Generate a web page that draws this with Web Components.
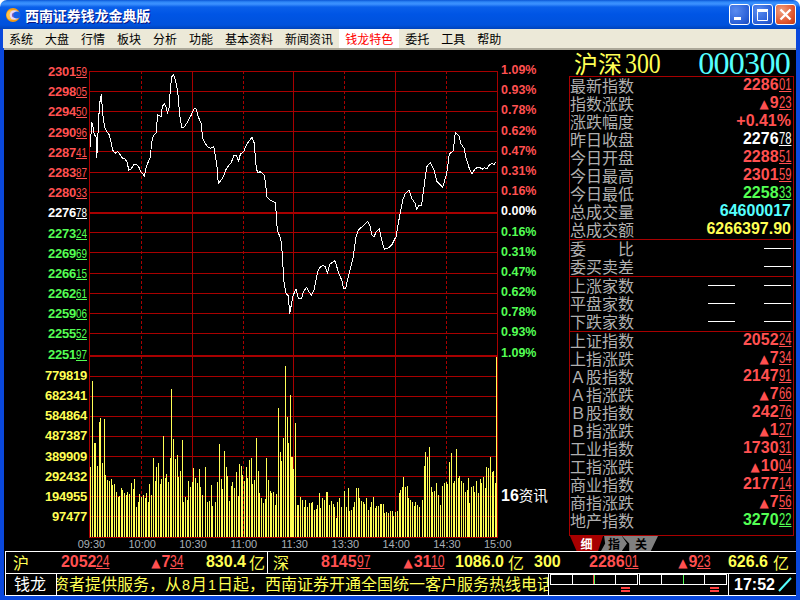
<!DOCTYPE html>
<html lang="zh">
<head>
<meta charset="utf-8">
<title>西南证券钱龙金典版</title>
<style>
html, body { margin: 0; padding: 0; background: #fff; }
</style>
</head>
<body>
<qm-window></qm-window>
<script>
const CJK = '"Noto Sans CJK SC", sans-serif';
const LATIN = '"Liberation Sans", "Noto Sans CJK SC", sans-serif';
const TONES = { red: '#ff5050', green: '#54ff54', white: '#ffffff', cyan: '#54ffff', yellow: '#ffff54' };

/**
 * A number in the terminal's style: big integer part, squeezed underlined decimals
 */
customElements.define('qm-num', class extends HTMLElement {

  constructor() {
    super();

    this.attachShadow({ mode: 'open' });
    const [whole, decimals] = (this.getAttribute('v') || '').split('.');
    const plain = this.hasAttribute('plain');
    const text = plain ? this.getAttribute('v') : `${whole}<u><i>${decimals || ''}</i></u>`;

    this.shadowRoot.innerHTML = `
      <style>
      :host {
        display: inline-block;
        font: bold var(--num-size, 16px) ${LATIN};
        color: ${TONES[this.getAttribute('tone') || 'red']};
        white-space: nowrap;
        letter-spacing: var(--num-track, 0);
      }
      u {
        display: inline-block;
        font-weight: 400;
        letter-spacing: 0;
        width: calc(1.112em * var(--dec, .7));
        text-decoration: underline;
      }
      i {
        display: inline-block;
        font-style: normal;
        transform: scaleX(var(--dec, .7));
        transform-origin: 0 50%;
        text-decoration: underline;
      }
      .up {
        font: 12px "DejaVu Sans", sans-serif;
        margin-right: 1px;
        letter-spacing: 0;
      }
      </style>
      ${this.hasAttribute('up') ? '<span class="up">▲</span>' : ''}${text}
    `;
  }

});


customElements.define('qm-titlebar', class extends HTMLElement {

  constructor() {
    super();

    this.attachShadow({ mode: 'open' });

    this.shadowRoot.innerHTML = `
      <style>
      :host {
        display: flex;
        align-items: center;
        height: 29px;
        flex: none;
        box-sizing: border-box;
        padding: 0 4px 0 5px;
        border-radius: 7px 7px 0 0;
        background: linear-gradient(#0a56d6 0, #2f88f8 2px, #3d92ff 4px, #0a60ea 7px, #0055e5 14px, #0052dc 25px, #0043bb 29px);
      }
      .name {
        margin-left: 4px;
        font: bold 14px/16px ${CJK};
        letter-spacing: -.1px;
        color: #fff;
        text-shadow: 1px 1px 0 #0a1883;
        flex: 1;
      }
      .btns { display: flex; gap: 2px; }
      .btn {
        width: 21px;
        height: 21px;
        box-sizing: border-box;
        border: 1px solid #fff;
        border-radius: 3px;
        background: radial-gradient(circle at 30% 30%, #5a8cf0, #2a5fd6 70%, #1c48b8);
        display: block;
      }
      .btn.close { background: radial-gradient(circle at 30% 30%, #f0a080, #e0542c 65%, #c03a14); }
      svg { display: block; }
      </style>
      <svg width="16" height="16" viewBox="0 0 16 16">
        <circle cx="8" cy="8" r="7" fill="#f59a10"/>
        <circle cx="6.5" cy="8" r="5" fill="#ffc34a"/>
        <circle cx="9.5" cy="8" r="4.8" fill="#e4d8fb"/>
        <circle cx="9.5" cy="8" r="2.6" fill="#7f5ec0"/>
        <circle cx="12" cy="8" r="3.6" fill="#1560e6"/>
      </svg>
      <span class="name">西南证券钱龙金典版</span>
      <div class="btns">
        <svg class="btn" viewBox="0 0 19 19"><rect x="4" y="12" width="7" height="3" fill="#fff"/></svg>
        <svg class="btn" viewBox="0 0 19 19"><path d="M4.5 6.5h10v9h-10z" fill="none" stroke="#fff"/><rect x="4" y="4" width="11" height="2.5" fill="#fff"/></svg>
        <svg class="btn close" viewBox="0 0 19 19"><path d="M4.5 4.5l10 10M14.5 4.5l-10 10" stroke="#fff" stroke-width="2.4"/></svg>
      </div>
    `;
  }

});


customElements.define('qm-menubar', class extends HTMLElement {

  constructor() {
    super();

    this.attachShadow({ mode: 'open' });

    const items = ['系统', '大盘', '行情', '板块', '分析', '功能', '基本资料', '新闻资讯', '钱龙特色', '委托', '工具', '帮助'];

    this.shadowRoot.innerHTML = `
      <style>
      :host {
        display: flex;
        flex: none;
        height: 19px;
        margin-left: -1px;
        background: #ece9d8;
        font: 12px/19px ${CJK};
        color: #000;
      }
      span { padding: 0 6px; }
      .on { background: #fff; color: #f00; }
      </style>
      ${items.map((m) => `<span class="${m === '钱龙特色' ? 'on' : ''}">${m}</span>`).join('')}
    `;
  }

});


/**
 * The intraday chart: price and volume drawn in one svg, axis labels either side in flow
 */
customElements.define('qm-chart', class extends HTMLElement {

  constructor() {
    super();

    this.attachShadow({ mode: 'open' });

    const prices = ['2301.59', '2298.05', '2294.50', '2290.96', '2287.41', '2283.87', '2280.33', '2276.78', '2273.24', '2269.69', '2266.15', '2262.61', '2259.06', '2255.52', '2251.97'];
    const volumes = ['779819', '682341', '584864', '487387', '389909', '292432', '194955', '97477'];
    const pcts = ['1.09%', '0.93%', '0.78%', '0.62%', '0.47%', '0.31%', '0.16%', '0.00%', '0.16%', '0.31%', '0.47%', '0.62%', '0.78%', '0.93%', '1.09%'];
    const times = ['09:30', '10:00', '10:30', '11:00', '11:30', '13:30', '14:00', '14:30', '15:00'];
    const tone = (i) => (i < 7 ? 'red' : i === 7 ? 'white' : 'green');

    this.shadowRoot.innerHTML = `
      <style>
      :host {
        display: grid;
        grid-template-columns: 84px 409px 71px;
        grid-template-rows: 488px 13px;
        width: 564px;
        flex: none;
        --num-size: 13px;
        --num-track: -.25px;
        --dec: .76;
      }
      .axis { display: flex; flex-direction: column; padding-top: 11px; box-sizing: border-box; }
      .axis div { height: 20.2px; line-height: 20.2px; flex: none; }
      .left { text-align: right; padding-right: 2px; }
      .left .vol { font: bold 13px/20.2px ${LATIN}; letter-spacing: -.25px; color: ${TONES.yellow}; }
      .left .vol.first { margin-top: 2px; }
      .pct { padding: 10px 0 0 3px; font: bold 12.5px/20.2px ${LATIN}; }
      .pct .news {
        margin-top: auto;
        margin-bottom: 34px;
        height: 18px;
        line-height: 18px;
        color: #fff;
        font: 14.5px/18px ${CJK};
        white-space: nowrap;
      }
      .news b { font: bold 16px/18px ${LATIN}; }
      svg { display: block; }
      .times {
        grid-column: 1 / -1;
        display: flex;
        padding-left: 61px;
        font: 11px/13px ${LATIN};
        color: #a8b0b8;
      }
      .times span { flex: 0 0 50.8px; text-align: center; }
      </style>
      <div class="axis left">
        ${prices.map((p, i) => `<div><qm-num v="${p}" tone="${tone(i)}"></qm-num></div>`).join('')}
        ${volumes.map((v, i) => `<div class="vol ${i ? '' : 'first'}">${v}</div>`).join('')}
      </div>
      <svg width="409" height="488" viewBox="89 50 409 488" shape-rendering="crispEdges">${this.plot()}</svg>
      <div class="axis pct">
        ${pcts.map((p, i) => `<div style="color:${TONES[tone(i)]}">${p}</div>`).join('')}
        <div class="news"><b>16</b>资讯</div>
      </div>
      <div class="times">${times.map((t) => `<span>${t}</span>`).join('')}</div>
    `;
  }

  plot() {
    const rows = [71, 91, 111, 131, 151, 172, 192, 232, 252, 273, 293, 313, 333, 376, 396, 416, 436, 456, 476, 496, 516, 537];
    const solid = [89, 192, 293, 395, 497];
    const dashed = [141, 243, 344, 446];

    // traced from the chart at 3x: [x, y] pairs in crop coordinates
    const lineA = [[16,260],[20,185],[25,205],[28,225],[33,230],[35,293],[37,265],[41,175],[44,130],[49,103],[53,160],[57,190],[61,208],[66,215],[73,225],[78,245],[83,270],[90,280],[98,274],[106,285],[113,295],[120,296],[127,308],[131,330],[138,327],[147,313],[155,315],[161,320],[167,335],[172,340],[178,348],[183,325],[190,305],[196,293],[200,245],[205,228],[213,218],[218,165],[228,170],[232,140],[238,130],[243,140],[247,158],[252,145],[256,90],[260,50],[266,45],[272,65],[278,95],[284,165],[290,202],[297,202],[305,190],[312,176],[319,165],[327,146],[334,147],[340,170],[348,190],[353,235],[360,250],[368,260],[377,265],[386,260],[391,285],[396,320],[400,370],[407,362],[415,350],[422,330],[430,318],[438,310],[447,285],[453,285],[461,303],[466,283],[476,275],[484,255],[492,243],[501,232],[508,250],[511,290],[514,325],[518,338],[526,335],[538,345],[542,375],[546,410],[555,420],[570,427],[574,460],[577,512],[587,535],[592,580],[596,660],[603,700],[610,708],[614,763]];
    const lineB = [[0,757],[8,710],[18,686],[25,716],[35,715],[40,695],[50,682],[57,695],[64,706],[72,690],[83,635],[90,622],[100,616],[106,620],[112,640],[120,612],[135,602],[146,640],[155,660],[161,686],[167,685],[175,650],[190,590],[198,530],[205,510],[220,497],[233,484],[240,498],[245,525],[252,532],[258,515],[268,506],[275,540],[283,568],[295,564],[305,555],[318,530],[325,490],[338,420],[345,403],[357,391],[365,415],[375,430],[380,448],[386,436],[395,435],[402,380],[410,320],[421,308],[432,330],[441,365],[458,382],[470,340],[478,282],[490,272],[496,217],[508,228],[512,250],[522,265],[528,295],[538,325],[546,342],[556,325],[568,322],[577,328],[583,323],[590,327],[598,315],[608,310],[612,315],[617,305]];
    const barsA = [[16,350],[22,93],[27,280],[32,280],[37,347],[43,215],[47,205],[53,340],[58,207],[62,375],[67,390],[73,392],[78,388],[83,405],[88,402],[95,425],[100,440],[103,437],[109,415],[113,420],[118,430],[124,436],[128,426],[133,432],[139,400],[144,416],[149,388],[154,470],[160,456],[164,432],[170,440],[175,435],[180,445],[185,430],[190,455],[193,402],[199,435],[205,323],[210,392],[215,350],[220,340],[225,402],[230,388],[235,258],[240,385],[245,372],[250,395],[256,323],[259,117],[265,267],[271,327],[276,316],[281,380],[286,362],[292,270],[296,455],[302,440],[306,450],[311,392],[316,412],[322,395],[326,353],[331,385],[337,398],[342,357],[347,410],[352,436],[360,352],[362,390],[367,455],[373,452],[378,405],[382,468],[390,455],[397,397],[403,282],[409,388],[413,418],[418,303],[423,350],[427,378],[433,452],[439,408],[443,395],[448,415],[454,365],[459,437],[463,342],[469,347],[473,375],[479,392],[483,350],[488,385],[493,330],[499,323],[503,403],[508,390],[514,265],[520,362],[524,430],[530,443],[535,458],[541,448],[545,323],[550,390],[555,423],[560,430],[565,426],[571,464],[575,432],[580,175],[586,305],[590,332],[595,263],[601,48],[606,200],[611,278],[616,163],[620,320],[625,357]];
    const barsB = [[2,135],[7,320],[11,357],[16,218],[22,465],[26,465],[32,440],[37,450],[42,472],[46,450],[52,470],[58,460],[64,458],[68,456],[74,480],[78,477],[83,465],[88,428],[92,473],[97,443],[103,450],[109,426],[113,426],[118,465],[124,453],[129,462],[133,470],[138,505],[143,456],[149,443],[155,472],[163,422],[169,470],[175,413],[179,483],[185,480],[190,470],[193,456],[199,413],[205,413],[209,445],[214,453],[219,457],[224,462],[229,443],[235,480],[241,472],[245,456],[250,440],[256,475],[260,468],[265,468],[270,462],[275,462],[280,462],[284,490],[290,485],[295,488],[300,482],[306,483],[311,498],[316,485],[322,482],[327,430],[332,420],[338,410],[341,380],[347,410],[352,407],[355,443],[361,450],[367,455],[372,468],[376,457],[382,465],[387,470],[397,450],[403,347],[407,305],[412,320],[417,290],[423,410],[427,426],[433,422],[439,398],[445,435],[452,465],[458,407],[463,400],[469,396],[472,402],[478,335],[484,308],[489,400],[494,393],[499,296],[504,385],[508,378],[514,393],[520,400],[525,425],[531,420],[535,383],[539,460],[544,410],[549,408],[553,425],[559,392],[565,428],[571,388],[575,398],[581,380],[586,415],[590,350],[595,353],[601,320],[606,365],[611,363],[617,400],[620,20]];

    const line = lineA.map(([x, y]) => [85 + x / 3, 60 + y / 3])
      .concat(lineB.map(([x, y]) => [290 + x / 3, 60 + y / 3]));
    const bars = barsA.map(([x, y]) => [85 + x / 3, 350 + y / 3])
      .concat(barsB.map(([x, y]) => [290 + x / 3, 350 + y / 3]));

    const grid = '#a80000';
    const dashes = [];
    dashed.forEach((x) => {
      for (let y = 71; y < 537; y += 5) {
        dashes.push(`<rect x="${x}" y="${y}" width="1" height="3" fill="${grid}"/>`);
      }
    });

    return `
      ${rows.map((y) => `<rect x="89" y="${y}" width="409" height="1" fill="${grid}"/>`).join('')}
      <rect x="89" y="212" width="409" height="2" fill="${grid}"/>
      <rect x="89" y="355" width="409" height="2" fill="${grid}"/>
      ${solid.map((x) => `<rect x="${x}" y="71" width="1" height="467" fill="${grid}"/>`).join('')}
      ${dashes.join('')}
      <polyline points="${line.map(([x, y]) => `${x.toFixed(1)},${y.toFixed(1)}`).join(' ')}" fill="none" stroke="#fff"/>
      ${bars.map(([x, y]) => `<rect x="${Math.floor(x)}" y="${Math.round(y)}" width="1" height="${537 - Math.round(y)}" fill="#ffff55"/>`).join('')}
    `;
  }

});


/**
 * One label + values line of the quote panel. The label goes in the default slot
 */
customElements.define('qm-row', class extends HTMLElement {

  constructor() {
    super();

    this.attachShadow({ mode: 'open' });

    this.shadowRoot.innerHTML = `
      <style>
      :host {
        display: flex;
        align-items: center;
        justify-content: space-between;
        height: 18px;
        box-sizing: border-box;
        padding: 0 2px 2px 0;
      }
      .label {
        font: 16px/16px ${CJK};
        color: #b0b0b0;
        width: 64px;
        display: flex;
        justify-content: space-between;
        white-space: nowrap;
      }
      .value { display: flex; align-items: center; }
      </style>
      <div class="label"><slot></slot></div>
      <div class="value"><slot name="value"></slot></div>
    `;
  }

});


customElements.define('qm-dash', class extends HTMLElement {

  constructor() {
    super();

    this.attachShadow({ mode: 'open' });

    this.shadowRoot.innerHTML = `
      <style>
      :host { display: block; width: 27px; height: 1px; background: #fff; margin-left: 29px; }
      </style>
    `;
  }

});


customElements.define('qm-tabs', class extends HTMLElement {

  constructor() {
    super();

    this.attachShadow({ mode: 'open' });

    this.shadowRoot.innerHTML = `
      <style>
      :host {
        display: flex;
        height: 15px;
        margin-left: 1px;
        font: bold 12px/15px ${CJK};
      }
      span {
        display: block;
        height: 15px;
        text-align: center;
      }
      .on {
        width: 33px;
        background: #a80000;
        color: #fff;
        clip-path: polygon(0 0, 100% 0, 85% 100%, 20% 100%);
      }
      .tab2 {
        width: 26px;
        margin-left: -2px;
        background: #808080;
        color: #000;
        clip-path: polygon(12% 0, 80% 0, 100% 50%, 80% 100%, 0 100%, 16% 50%);
      }
      .tab3 {
        width: 36px;
        margin-left: -5px;
        padding-left: 2px;
        box-sizing: border-box;
        background: #808080;
        color: #000;
        clip-path: polygon(0 0, 100% 0, 80% 100%, 20% 100%, 20% 50%);
      }
      </style>
      <span class="on">细</span><span class="tab2">指</span><span class="tab3">关</span>
    `;
  }

});


customElements.define('qm-quote-panel', class extends HTMLElement {

  constructor() {
    super();

    this.attachShadow({ mode: 'open' });

    const num = (v, tone, up) => `<qm-num slot="value" v="${v}" tone="${tone}" ${up ? 'up' : ''}></qm-num>`;
    const plain = (v, tone) => `<qm-num slot="value" v="${v}" tone="${tone}" plain></qm-num>`;
    const dash = '<qm-dash slot="value"></qm-dash>';
    const row = (label, value) => `<qm-row>${label}${value}</qm-row>`;

    const quote = [
      ['最新指数', num('2286.01', 'red')],
      ['指数涨跌', num('9.23', 'red', true)],
      ['涨跌幅度', plain('+0.41%', 'red')],
      ['昨日收盘', num('2276.78', 'white')],
      ['今日开盘', num('2288.51', 'red')],
      ['今日最高', num('2301.59', 'red')],
      ['今日最低', num('2258.33', 'green')],
      ['总成交量', plain('64600017', 'cyan')],
      ['总成交额', plain('6266397.90', 'yellow')],
    ];
    const indexes = [
      ['上证指数', num('2052.24', 'red')],
      ['上指涨跌', num('7.34', 'red', true)],
      ['Ａ股指数', num('2147.91', 'red')],
      ['Ａ指涨跌', num('7.66', 'red', true)],
      ['Ｂ股指数', num('242.76', 'red')],
      ['Ｂ指涨跌', num('1.27', 'red', true)],
      ['工业指数', num('1730.31', 'red')],
      ['工指涨跌', num('10.04', 'red', true)],
      ['商业指数', num('2177.14', 'red')],
      ['商指涨跌', num('7.56', 'red', true)],
      ['地产指数', num('3270.22', 'green')],
    ];

    this.shadowRoot.innerHTML = `
      <style>
      :host { display: block; width: 226px; flex: none; }
      .head {
        display: flex;
        justify-content: space-between;
        align-items: center;
        height: 26px;
        padding: 0 5px 0 5px;
        white-space: nowrap;
      }
      .name { display: flex; align-items: center; color: #ffff54; }
      .name span { font: 24px/26px ${CJK}; }
      .name em {
        display: block;
        width: 39px;
        margin-left: 3px;
        font: normal 29px/26px "Liberation Serif", serif;
        transform: scaleX(.82);
        transform-origin: 0 50%;
      }
      .code { font: 32px/26px "Liberation Serif", serif; color: #54ffff; letter-spacing: -.7px; }
      .box {
        box-sizing: border-box;
        width: 225px;
        height: 460px;
        border: 1px solid #a80000;
      }
      section { border-top: 1px solid #a80000; }
      section:first-child { border-top: 0; }
      </style>
      <div class="head">
        <div class="name"><span>沪深</span><em>300</em></div>
        <div class="code">000300</div>
      </div>
      <div class="box">
        <section>${quote.map(([l, v]) => row(l, v)).join('')}</section>
        <section>
          ${row('<span>委</span><span>比</span>', dash)}
          ${row('委买卖差', dash)}
        </section>
        <section>
          ${row('上涨家数', dash + dash)}
          ${row('平盘家数', dash + dash)}
          ${row('下跌家数', dash + dash)}
        </section>
        <section>${indexes.map(([l, v]) => row(l, v)).join('')}</section>
      </div>
      <qm-tabs></qm-tabs>
    `;
  }

});


/**
 * A market summary cell in the bottom bar. --cols passes in the widths of its columns
 */
customElements.define('qm-market', class extends HTMLElement {

  constructor() {
    super();

    this.attachShadow({ mode: 'open' });

    const label = this.getAttribute('label');
    const isCode = this.hasAttribute('code');

    this.shadowRoot.innerHTML = `
      <style>
      :host {
        display: grid;
        grid-template-columns: var(--cols) auto;
        align-items: center;
        height: 100%;
        box-sizing: border-box;
        padding-bottom: 2px;
        font: 16px/18px ${CJK};
        color: #ffff54;
        --dec: .76;
        white-space: nowrap;
      }
      .r { text-align: right; font: bold 16px/18px ${LATIN}; }
      .code { font: bold 16px/18px ${LATIN}; }
      .unit { margin-left: var(--unit-gap, 3px); }
      </style>
      <div class="${isCode ? 'code' : ''}">${label}</div>
      <div class="r"><qm-num v="${this.getAttribute('value')}"></qm-num></div>
      <div class="r"><qm-num v="${this.getAttribute('change')}" up></qm-num></div>
      <div class="r">${this.getAttribute('amount')}</div>
      <div class="unit">亿</div>
    `;
  }

});


customElements.define('qm-gauge', class extends HTMLElement {

  constructor() {
    super();

    this.attachShadow({ mode: 'open' });

    const group = (mark) => `
      <div class="group">
        <div class="bar">
          <i></i>
          <i class="${mark}"></i>
          <i></i>
          <i></i>
        </div>
        <div class="eq"><b></b><b></b></div>
      </div>
    `;

    this.shadowRoot.innerHTML = `
      <style>
      :host {
        display: flex;
        gap: 1px;
        padding: 0 0 0 1px;
        width: 179px;
        box-sizing: border-box;
      }
      .group { width: 88px; }
      .bar {
        display: flex;
        height: 9px;
        border: 1px solid #fff;
        box-sizing: content-box;
        width: 86px;
      }
      i { flex: 1; border-right: 1px solid #fff; }
      i:last-child { border-right: 0; }
      i.mix { border-right: 1px solid #54ff54; box-shadow: inset -1px 0 0 #ff5050; }
      i.up { border-right: 1px solid #54ff54; }
      .eq { margin: 2px 8px 0 auto; width: 9px; }
      b { display: block; height: 2px; background: #ff4040; margin-bottom: 1px; }
      </style>
      ${group('mix')}${group('up')}
    `;
  }

});


customElements.define('qm-statusbar', class extends HTMLElement {

  constructor() {
    super();

    this.attachShadow({ mode: 'open' });

    this.shadowRoot.innerHTML = `
      <style>
      :host {
        display: block;
        flex: none;
        border-left: 1px solid #fff;
      }
      .row {
        display: flex;
        height: 21px;
        border-top: 1px solid #fff;
        box-sizing: content-box;
      }
      .row.two { border-bottom: 1px solid #fff; }
      .sh { width: 262px; padding-left: 7px; box-sizing: border-box; border-right: 1px solid #fff; flex: none; --cols: 47px 50px 74px 62px; }
      .sz { width: 260px; padding-left: 5px; box-sizing: border-box; flex: none; --cols: 48px 48px 76px 59px; --unit-gap: 4px; }
      .hs { padding-left: 6px; --cols: 55px 49px 73px 57px; --unit-gap: 5px; }
      .who { width: 51px; box-sizing: border-box; padding-left: 8px; border-right: 1px solid #fff; flex: none; font: 16px/19px ${CJK}; color: #fff; }
      .news {
        width: 491px;
        flex: none;
        overflow: hidden;
        border-right: 1px solid #fff;
        font: 16px/19px ${CJK};
        color: #ffff54;
        white-space: nowrap;
      }
      .news span { display: block; margin-left: -4px; }
      .news em { font: normal 14.4px/19px ${LATIN}; margin: 0 1px; }
      .clock {
        display: flex;
        align-items: center;
        gap: 3px;
        padding: 0 0 1px 5px;
        border-left: 1px solid #fff;
        font: bold 16px/19px ${LATIN};
        color: #fff;
      }
      svg { display: block; }
      </style>
      <div class="row">
        <qm-market class="sh" label="沪" value="2052.24" change="7.34" amount="830.4"></qm-market>
        <qm-market class="sz" label="深" value="8145.97" change="31.10" amount="1086.0"></qm-market>
        <qm-market class="hs" code label="300" value="2286.01" change="9.23" amount="626.6"></qm-market>
      </div>
      <div class="row two">
        <div class="who">钱龙</div>
        <div class="news"><span>资者提供服务，从<em>8</em>月<em>1</em>日起，西南证券开通全国统一客户服务热线电话</span></div>
        <qm-gauge></qm-gauge>
        <div class="clock">
          17:52
          <svg width="14" height="16" viewBox="0 0 14 16"><path d="M1 15L13 2" stroke="#54ffff" stroke-width="2"/></svg>
        </div>
      </div>
    `;
  }

});


customElements.define('qm-window', class extends HTMLElement {

  constructor() {
    super();

    this.attachShadow({ mode: 'open' });

    this.shadowRoot.innerHTML = `
      <style>
      :host {
        display: flex;
        flex-direction: column;
        width: 800px;
        height: 600px;
        overflow: hidden;
      }
      .frame {
        flex: 1;
        display: flex;
        flex-direction: column;
        min-height: 0;
        border-style: solid;
        border-color: #0a48dc;
        border-width: 0 4px 5px 4px;
      }
      .client {
        flex: 1;
        display: flex;
        flex-direction: column;
        background: #000;
        border-top: 2px solid #aca899;
        min-height: 0;
        padding-left: 1px;
      }
      .main { display: flex; height: 501px; flex: none; }
      </style>
      <qm-titlebar></qm-titlebar>
      <div class="frame">
        <qm-menubar></qm-menubar>
        <div class="client">
          <div class="main">
            <qm-chart></qm-chart>
            <qm-quote-panel></qm-quote-panel>
          </div>
          <qm-statusbar></qm-statusbar>
        </div>
      </div>
    `;
  }

});
</script>
</body>
</html>
